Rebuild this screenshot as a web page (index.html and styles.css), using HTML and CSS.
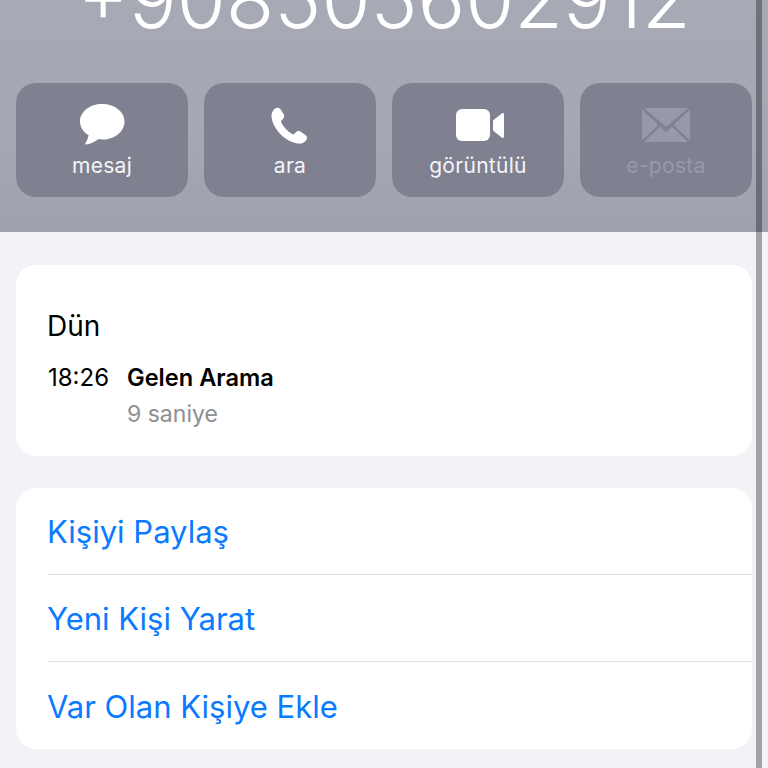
FILE: index.html
```html
<!DOCTYPE html>
<html lang="tr">
<head>
<meta charset="utf-8">
<title>Arama</title>
<link rel="stylesheet" href="styles.css">
</head>
<body>
<div class="screen">
  <header class="hero">
    <h1 class="number">+908505602912</h1>
    <div class="actions">
      <div class="action">
        <svg class="icon" width="46" height="44" viewBox="0 0 46 44"><path fill="#fff" d="M23 1C10.800 1 1 8.800 1 18.500c0 5.600 3.300 10.500 8.600 13.700-.6 3-2 6.300-3.300 8.300-.4.600 0 1.200.7 1.100 4.800-.8 9.200-3 12.600-5.500 1.300.2 2.600.4 3.900.4 12.200 0 22-7.800 22-18S35.200 1 23 1Z"/></svg>
        <span class="label">mesaj</span>
      </div>
      <div class="action">
        <svg class="icon" width="46" height="44" viewBox="0 0 46 44"><path fill="#fff" d="M8 5.600c1.900-1.500 4.200-1.100 5.500.7l3.100 4.700c1 1.600.8 3.500-.5 4.800l-1.900 2c-.4.500-.4 1.100 0 1.800 2.500 4.700 6.300 8.700 10.900 11.500.7.400 1.300.4 1.800 0l2-1.900c1.400-1.300 3.300-1.500 4.900-.4l4.600 3.100c1.900 1.300 2.200 3.500.7 5.300-1.800 2.300-4.500 3.700-7.400 3.400C19 39.500 6.300 26.700 4.500 14.300 4.100 11.200 5.500 7.600 8 5.600Z"/></svg>
        <span class="label">ara</span>
      </div>
      <div class="action">
        <svg class="icon" width="52" height="44" viewBox="0 0 52 44"><rect fill="#fff" x="4" y="6" width="34" height="32" rx="6"/><path fill="#fff" d="M41 18.500c0-.7.300-1.300.8-1.700l8-6.400c1-.7 2.200-.1 2.200 1.200v21.800c0 1.300-1.200 1.900-2.200 1.200l-8-6.400c-.5-.4-.8-1-.8-1.700Z"/></svg>
        <span class="label">görüntülü</span>
      </div>
      <div class="action disabled">
        <svg class="icon" width="48" height="44" viewBox="0 0 48 44"><path fill="#9699aa" d="M2 5h44L24 24Z"/><path fill="#9699aa" d="M0 6.500v31l16.500-15.500ZM48 6.500v31L31.500 22Z"/><path fill="#9699aa" d="M2 39h44L30 23.500 24 29l-6-5.500Z"/></svg>
        <span class="label">e-posta</span>
      </div>
    </div>
  </header>
  <main class="content">
    <section class="card log">
      <h2 class="day">Dün</h2>
      <div class="entry">
        <span class="time">18:26</span>
        <div class="detail">
          <span class="kind">Gelen Arama</span>
          <span class="duration">9 saniye</span>
        </div>
      </div>
    </section>
    <section class="card menu">
      <a class="row">Kişiyi Paylaş</a>
      <a class="row">Yeni Kişi Yarat</a>
      <a class="row">Var Olan Kişiye Ekle</a>
    </section>
  </main>
  <div class="scrollbar"></div>
</div>
</body>
</html>
```
FILE: styles.css
```css
* { box-sizing: border-box; }
html, body { margin: 0; height: 100%; }
body { font-family: Inter, "Liberation Sans", sans-serif; background: #f2f2f7; overflow: hidden; }
.screen { position: relative; width: 768px; height: 768px; overflow: hidden; background: #f2f2f7; }
.hero {
  height: 232px;
  background: linear-gradient(180deg, #a7a9b5 0%, #a5a7b4 60%, #9fa1ae 100%);
  padding: 0 16px;
  overflow: hidden;
  display: flex;
  flex-direction: column;
  justify-content: flex-end;
}
.number {
  margin: 0 0 46px;
  font-size: 79.4px;
  font-weight: 300;
  line-height: 75px;
  color: #fff;
  text-align: center;
  white-space: nowrap;
}
.actions { display: grid; grid-template-columns: repeat(4, 172px); gap: 16px; margin-bottom: 35px; }
.action {
  height: 114px;
  border-radius: 20px;
  background: #7f8191;
  display: flex;
  flex-direction: column;
  align-items: center;
  padding-top: 20px;
  color: #f4f4f7;
}
.icon { display: block; }
.label { margin-top: 7px; font-size: 21px; letter-spacing: .3px; line-height: 24px; }
.action.disabled .label { color: #9699aa; }
.content { padding: 33px 16px 0; display: flex; flex-direction: column; gap: 32px; }
.card { background: #fff; border-radius: 20px; }
.log { height: 191px; padding: 44px 31px 0 32px; }
.day { margin: 0 0 0 -1px; font-size: 28px; font-weight: 400; line-height: 34px; color: #000; }
.entry { display: flex; margin-top: 21px; }
.time { width: 79px; font-size: 24px; line-height: 28px; color: #000; }
.detail { display: flex; flex-direction: column; }
.kind { font-size: 23.6px; font-weight: 600; line-height: 28px; color: #000; }
.duration { margin-top: 8px; font-size: 23px; line-height: 28px; color: #8e8e93; }
.menu { padding-left: 32px; }
.row {
  display: block;
  height: 87px;
  padding-top: 1px;
  font-size: 31px;
  line-height: 86px;
  text-indent: -1px;
  color: #0a7aff;
  border-top: 1px solid #dfdfe3;
}
.row:first-child { height: 86px; padding-top: 1px; border-top: 0; }
.row:last-child { height: 88px; line-height: 88px; }
.scrollbar { position: absolute; top: 0; right: 6px; bottom: 0; width: 6px; background: rgba(0, 0, 0, .33); }
```
